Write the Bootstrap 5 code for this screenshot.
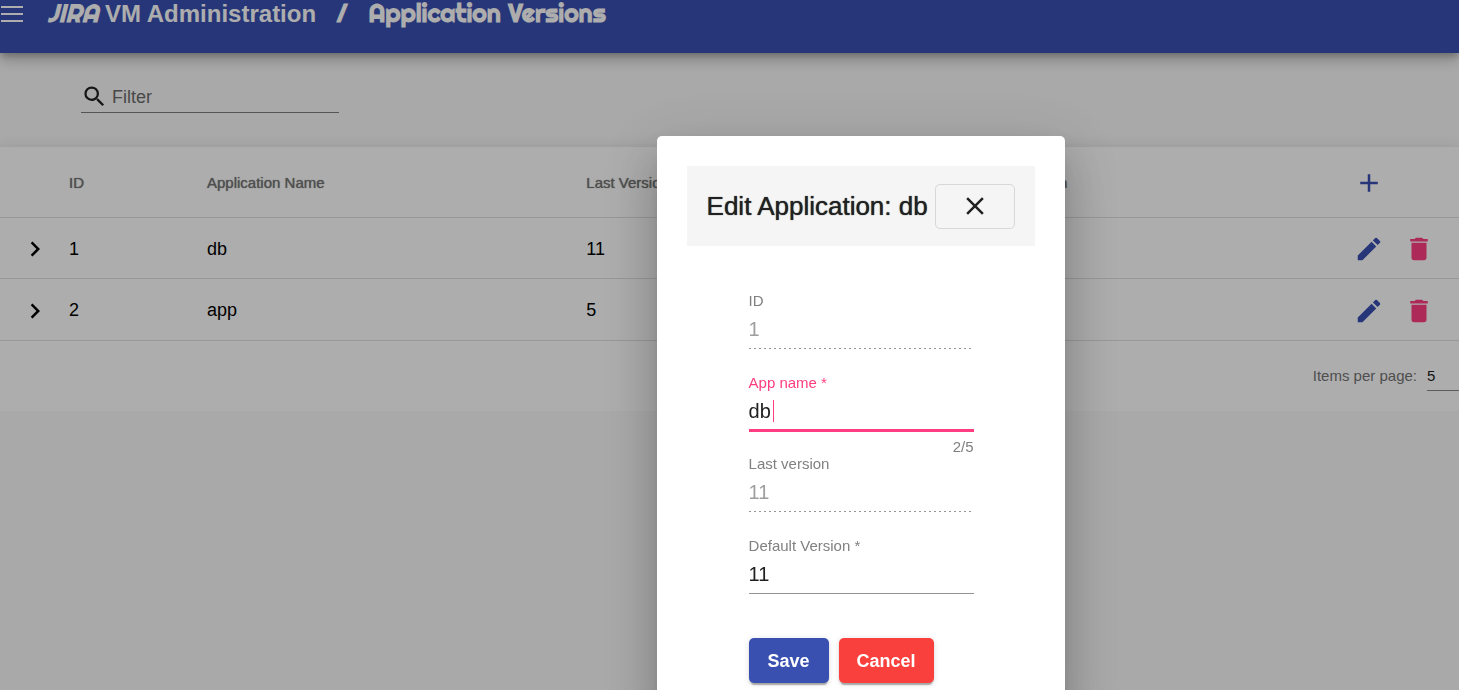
<!DOCTYPE html>
<html lang="en">
<head>
<meta charset="utf-8">
<meta name="viewport" content="width=device-width, initial-scale=1">
<title>Application Versions</title>
<link rel="stylesheet" href="https://cdn.jsdelivr.net/npm/bootstrap@5.3.0/dist/css/bootstrap.min.css">
<style>
  :root { --indigo: #3a50b1; --pink: #ff3d80; --warn: #fa403c; }
  html, body { height: 100%; }
  body { font-family: "Liberation Sans", Arial, sans-serif; background: #fafafa; color: #212121; overflow: hidden; }
  svg { display: block; fill: currentColor; }
  .icon-btn { border: 0; padding: 0; background: none; color: inherit; }

  /* toolbar */
  .toolbar { height: 53px; background: var(--indigo); color: #fff; padding-bottom: 26px; position: relative; z-index: 1;
    box-shadow: 0 4px 6px -1px rgba(0,0,0,.2), 0 8px 12px 0 rgba(0,0,0,.14), 0 1px 22px 0 rgba(0,0,0,.12); }
  .toolbar h1 { font-size: 24px; line-height: 26px; white-space: nowrap; }
  .toolbar a { color: inherit; text-decoration: none; }
  .display-face { font-family: Righteous, Lato, sans-serif; font-size: 25px; font-weight: 900; }

  /* filter */
  .filter-bar { height: 94px; padding: 28px 81px 0; }
  .filter-box { width: 258px; height: 32px; border-bottom: 1px solid rgba(0,0,0,.5); }
  .filter-box input { border: 0; outline: 0; background: none; padding: 0; width: 100%; font-size: 18px; line-height: 24px; }
  .filter-box input::placeholder { color: #6b6b6b; opacity: 1; }

  /* table */
  .app-table { table-layout: fixed; border-collapse: separate; border-spacing: 0; background: #fff; position: relative;
    box-shadow: 0 6px 6px -4px rgba(0,0,0,.2), 0 10px 12px 1px rgba(0,0,0,.14), 0 4px 18px 2px rgba(0,0,0,.12); }
  .app-table th { height: 71px; font-size: 15px; font-weight: 500; color: #757575; text-shadow: 0 0 1px #757575; }
  .app-table td { height: 61px; font-size: 18px; color: #000; }
  .app-table tr:last-child td { height: 62px; }
  .app-table th, .app-table td { padding: 2px 0 0; border-bottom: 1px solid #e0e0e0; vertical-align: middle; white-space: nowrap; }
  .col-toggle { width: 69px; }
  .col-id { width: 138px; }
  .col-app { width: 26%; }
  .actions { gap: 20px; padding-right: 25px; color: var(--indigo); }
  .actions-head { padding-right: 75px; }
  .delete { color: var(--pink); }
  .pager { position: relative; height: 70px; background: #fff; font-size: 15px; color: #757575; gap: 10px; }
  .pager select { appearance: none; width: 32px; height: 30px; border: 0; border-bottom: 1px solid #8a8a8a; border-radius: 0; background: none; padding: 2px 0 0; color: #212121; }

  /* dialog */
  .shade { --bs-backdrop-opacity: 1; background: rgba(0,0,0,.32); }
  .edit-dialog { width: 408px; max-width: none; margin: 136px 0 0 45%; }
  .edit-panel { border: 0; border-radius: 5px; padding: 30px; background: #fff;
    box-shadow: 0 14px 19px -9px rgba(0,0,0,.2), 0 30px 48px 4px rgba(0,0,0,.14), 0 11px 58px 10px rgba(0,0,0,.12); }
  .edit-head { background: #f5f5f5; height: 80px; padding: 0 20px; }
  .edit-head h2 { font-size: 26px; line-height: 30px; font-weight: 500; white-space: nowrap; text-shadow: 0 0 1px #212121; }
  .close-btn { width: 80px; height: 45px; flex: none; border: 1px solid #d8d8d8; border-radius: 5px; background: none; color: #212121; }
  .edit-form { width: 225px; margin: 46px auto 0 62px; }
  .field { height: 82px; }
  .field label { display: block; font-size: 15px; line-height: 18px; color: #808080; }
  .field input { display: block; width: 100%; height: 39px; padding: 7px 0; border: 0; border-bottom: 1px solid #949494; border-radius: 0; outline: 0; background: none; font-size: 20px; line-height: 24px; color: #212121; }
  .field input:disabled { border-bottom-color: transparent; color: #9e9e9e;
    background: linear-gradient(to right, #949494 2px, transparent 2px) 0 100% / 5px 1px repeat-x border-box; }
  .field-active { height: 81px; }
  .field-active label { color: var(--pink); }
  .field-active input { height: 40px; padding-bottom: 6px; border-bottom: 3px solid var(--pink); caret-color: transparent; }
  .text-caret { position: absolute; left: 24px; top: 8px; width: 1px; height: 22px; background: var(--pink); }
  .hint { font-size: 15px; line-height: 18px; color: #808080; padding-top: 6px; }
  .act-btn { min-width: 80px; height: 45px; padding: 1px 18px 0; border: 0; border-radius: 5px; color: #fff; font-size: 18px; font-weight: 700;
    box-shadow: 0 4px 1px -2px rgba(0,0,0,.2), 0 2px 2px 0 rgba(0,0,0,.14), 0 1px 6px 0 rgba(0,0,0,.12); }
  .act-save { background: var(--indigo); }
  .act-cancel { background: var(--warn); }
  .form-actions { gap: 10px; padding-top: 19px; }
</style>
</head>
<body>
<svg width="0" height="0" class="position-absolute" aria-hidden="true">
  <symbol id="chevron" viewBox="0 0 24 24"><path d="M10 6 8.59 7.41 13.17 12l-4.58 4.59L10 18l6-6z"/></symbol>
  <symbol id="pencil" viewBox="0 0 24 24"><path d="M3 17.25V21h3.75L17.81 9.94l-3.75-3.75L3 17.25zM20.71 7.04a1 1 0 0 0 0-1.41l-2.34-2.34a1 1 0 0 0-1.41 0l-1.83 1.83 3.75 3.75 1.83-1.83z"/></symbol>
  <symbol id="bin" viewBox="0 0 24 24"><path d="M6 19c0 1.100.9 2 2 2h8c1.100 0 2-.9 2-2V7H6v12zM19 4h-3.500l-1-1h-5l-1 1H5v2h14V4z"/></symbol>
</svg>

<header class="toolbar d-flex align-items-center">
  <button class="icon-btn" aria-label="Menu"><svg width="24" height="16" viewBox="0 0 24 16"><path d="M1 0h22v2H1zM1 7h22v2H1zM1 14h22v2H1z"/></svg></button>
  <h1 class="d-flex align-items-baseline m-0 fw-bold ms-4">
    <a href="#"><em class="display-face">JIRA</em> VM Administration</a>
    <span class="display-face px-3 mx-1">/</span>
    <span class="display-face">Application Versions</span>
  </h1>
</header>

<main>
  <div class="filter-bar">
    <div class="filter-box d-flex align-items-center">
      <svg class="flex-shrink-0" width="27" height="27" viewBox="0 0 24 24" aria-hidden="true"><path d="M15.500 14h-.79l-.28-.27A6.470 6.470 0 0 0 16 9.500 6.500 6.500 0 1 0 9.500 16c1.610 0 3.090-.59 4.230-1.570l.27.28v.79l5 4.990L20.490 19l-4.990-5zm-6 0a4.500 4.500 0 1 1 0-9 4.500 4.500 0 0 1 0 9z"/></svg>
      <input class="ms-1" type="text" placeholder="Filter" aria-label="Filter">
    </div>
  </div>

  <table class="app-table w-100">
    <colgroup><col class="col-toggle"><col class="col-id"><col class="col-app"><col class="col-app"><col><col></colgroup>
    <thead>
      <tr><th></th><th>ID</th><th>Application Name</th><th>Last Version</th><th>Default Version</th>
        <th><div class="actions actions-head d-flex justify-content-end"><button class="icon-btn" aria-label="Add"><svg width="30" height="30" viewBox="0 0 24 24"><path d="M19 13h-6v6h-2v-6H5v-2h6V5h2v6h6z"/></svg></button></div></th></tr>
    </thead>
    <tbody>
      <tr>
        <td><button class="icon-btn d-block mx-auto" aria-label="Expand"><svg width="30" height="30"><use href="#chevron"/></svg></button></td>
        <td>1</td><td>db</td><td>11</td><td>11</td>
        <td><div class="actions d-flex justify-content-end"><button class="icon-btn" aria-label="Edit"><svg width="30" height="30"><use href="#pencil"/></svg></button><button class="icon-btn delete" aria-label="Delete"><svg width="30" height="30"><use href="#bin"/></svg></button></div></td>
      </tr>
      <tr>
        <td><button class="icon-btn d-block mx-auto" aria-label="Expand"><svg width="30" height="30"><use href="#chevron"/></svg></button></td>
        <td>2</td><td>app</td><td>5</td><td>5</td>
        <td><div class="actions d-flex justify-content-end"><button class="icon-btn" aria-label="Edit"><svg width="30" height="30"><use href="#pencil"/></svg></button><button class="icon-btn delete" aria-label="Delete"><svg width="30" height="30"><use href="#bin"/></svg></button></div></td>
      </tr>
    </tbody>
  </table>
  <div class="pager d-flex align-items-center justify-content-end">
    <label for="page-size">Items per page:</label>
    <select id="page-size"><option>5</option><option>10</option></select>
  </div>
</main>

<div class="modal-backdrop shade"></div>
<div class="modal d-block overflow-hidden" role="dialog" aria-modal="true" aria-labelledby="edit-title">
  <div class="modal-dialog edit-dialog">
    <div class="modal-content edit-panel">
      <div class="edit-head d-flex align-items-center justify-content-between">
        <h2 class="m-0" id="edit-title">Edit Application: db</h2>
        <button class="close-btn d-flex align-items-center justify-content-center p-0" aria-label="Close"><svg width="30" height="30" viewBox="0 0 24 24"><path d="M19 6.410 17.590 5 12 10.590 6.410 5 5 6.410 10.590 12 5 17.590 6.410 19 12 13.410 17.590 19 19 17.590 13.410 12z"/></svg></button>
      </div>
      <form class="edit-form">
        <div class="field"><label for="f-id">ID</label><input id="f-id" value="1" disabled></div>
        <div class="field field-active"><label for="f-name">App name *</label>
          <div class="position-relative"><input id="f-name" value="db" maxlength="5"><span class="text-caret"></span></div>
          <div class="hint text-end">2/5</div></div>
        <div class="field"><label for="f-last">Last version</label><input id="f-last" value="11" disabled></div>
        <div class="field"><label for="f-default">Default Version *</label><input id="f-default" value="11"></div>
        <div class="form-actions d-flex">
          <button type="button" class="act-btn act-save">Save</button>
          <button type="button" class="act-btn act-cancel">Cancel</button>
        </div>
      </form>
    </div>
  </div>
</div>
<script src="https://cdn.jsdelivr.net/npm/bootstrap@5.3.0/dist/js/bootstrap.bundle.min.js"></script>
</body>
</html>
